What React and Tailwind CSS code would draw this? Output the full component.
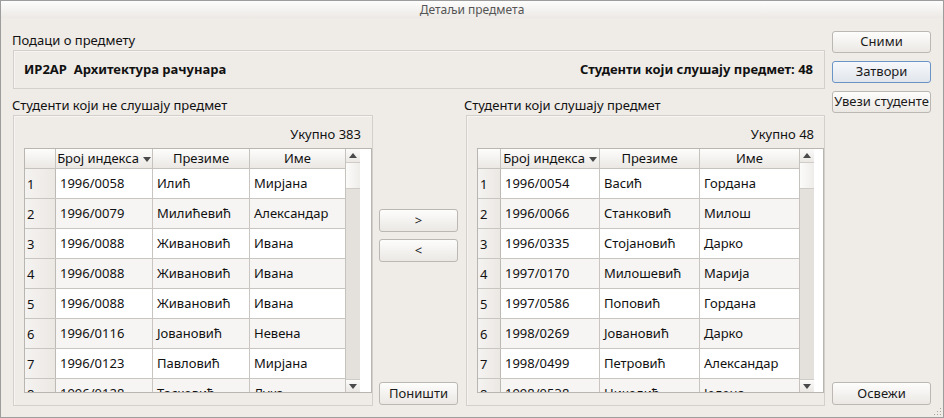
import clsx from "clsx";

const notListening = [
  ["1996/0058", "Илић", "Мирјана"],
  ["1996/0079", "Милићевић", "Александар"],
  ["1996/0088", "Живановић", "Ивана"],
  ["1996/0088", "Живановић", "Ивана"],
  ["1996/0088", "Живановић", "Ивана"],
  ["1996/0116", "Јовановић", "Невена"],
  ["1996/0123", "Павловић", "Мирјана"],
  ["1996/0128", "Тасковић", "Лука"],
];

const listening = [
  ["1996/0054", "Васић", "Гордана"],
  ["1996/0066", "Станковић", "Милош"],
  ["1996/0335", "Стојановић", "Дарко"],
  ["1997/0170", "Милошевић", "Марија"],
  ["1997/0586", "Поповић", "Гордана"],
  ["1998/0269", "Јовановић", "Дарко"],
  ["1998/0499", "Петровић", "Александар"],
  ["1998/0538", "Николић", "Јелена"],
];

function Btn({ children, primary, className }) {
  return (
    <div
      className={clsx(
        "flex items-center justify-center rounded-[3px] border text-[13px] text-[#1a1a1a]",
        primary
          ? "border-[#6a93c6] bg-linear-to-b from-[#f6f8fb] to-[#e1e6ec]"
          : "border-[#bbb7b2] bg-linear-to-b from-[#fdfdfc] to-[#ebe8e4]",
        className
      )}
    >
      {children}
    </div>
  );
}

function Scrollbar() {
  return (
    <div className="flex w-[15px] shrink-0 flex-col border-l border-[#c6c2bd] bg-[#e4e1dd]">
      <div className="flex h-[14px] items-center justify-center border-b border-[#cfcbc6] bg-linear-to-b from-[#fbfbfa] to-[#ebe8e4]">
        <div className="h-0 w-0 border-x-[4px] border-b-[5px] border-x-transparent border-b-[#4a4a4a]" />
      </div>
      <div className="h-[26px] border-b border-[#cfcbc6] bg-linear-to-r from-[#fbfbfa] to-[#efedea]" />
      <div className="flex-1" />
      <div className="flex h-[13px] items-center justify-center border-t border-[#cfcbc6] bg-linear-to-b from-[#fbfbfa] to-[#ebe8e4]">
        <div className="h-0 w-0 border-x-[4px] border-t-[5px] border-x-transparent border-t-[#4a4a4a]" />
      </div>
    </div>
  );
}

function StudentTable({ rows, wide }) {
  const rh = wide ? "w-[31px]" : "w-[23px]";
  const c1 = wide ? "w-[97px]" : "w-[99px]";
  const c2 = wide ? "w-[97px]" : "w-[100px]";
  const c3 = wide ? "w-[95px]" : "w-[99px]";
  return (
    <div className="flex h-[245px] border border-[#b9b5b0] bg-white">
      <div className="flex flex-col overflow-hidden">
        <div className="flex h-[20px] shrink-0 border-b border-[#c6c2bd] bg-linear-to-b from-[#fdfdfc] to-[#ebe8e4] text-[13px]">
          <div className={clsx(rh, "shrink-0 border-r border-[#c6c2bd]")} />
          <div className={clsx(c1, "flex shrink-0 items-center justify-center gap-[4px] border-r border-[#c6c2bd]")}>
            Број индекса
            <span className="mt-px h-0 w-0 border-x-[4px] border-t-[5px] border-x-transparent border-t-[#4a4a4a]" />
          </div>
          <div className={clsx(c2, "flex shrink-0 items-center justify-center border-r border-[#c6c2bd]")}>Презиме</div>
          <div className={clsx(c3, "flex shrink-0 items-center justify-center")}>Име</div>
        </div>
        {rows.map((r, i) => (
          <div
            key={i}
            className={clsx(
              "flex h-[30px] shrink-0 border-b border-[#c9c6c2] text-[13px]",
              i % 2 ? "bg-[#f6f5f3]" : "bg-white"
            )}
          >
            <div className={clsx(rh, "flex shrink-0 items-center border-r border-[#bdb9b4] bg-linear-to-r from-[#f5f3f1] to-[#ebe8e4] pl-[2px] pt-[3px]")}>
              {i + 1}
            </div>
            <div className={clsx(c1, "flex shrink-0 items-center border-r border-[#c9c6c2] pl-[4px]")}>{r[0]}</div>
            <div className={clsx(c2, "flex shrink-0 items-center border-r border-[#c9c6c2] pl-[4px]")}>{r[1]}</div>
            <div className={clsx(c3, "flex shrink-0 items-center pl-[4px]")}>{r[2]}</div>
          </div>
        ))}
      </div>
      <Scrollbar />
    </div>
  );
}

function Frame({ children, className }) {
  return (
    <div className={clsx("border border-[#d3cfca] bg-[#efece8] shadow-[inset_1px_1px_0_#f7f5f3]", className)}>
      {children}
    </div>
  );
}

export default function App() {
  return (
    <div className="flex h-[418px] w-[944px] flex-col border border-[#9d9d9d] bg-[#efebe7] font-['Noto_Sans',sans-serif] text-[#111]">
      <div className="flex h-[17px] shrink-0 items-center justify-center bg-linear-to-b from-[#fdfdfd] to-[#ece9e5] text-[12px] text-[#555]">
        Детаљи предмета
      </div>
      <div className="relative flex flex-1 pb-[11px] pl-[12px] pr-[12px] pt-[13px]">
        <div className="flex w-[812px] flex-col">
          <div className="-ml-px h-[19px] text-[13px] leading-[19px]">Подаци о предмету</div>
          <Frame className="flex h-[39px] items-center justify-between pl-[10px] pr-[11px] text-[13px] font-bold">
            <span>ИР2АР&nbsp;&nbsp;Архитектура рачунара</span>
            <span>Студенти који слушају предмет: 48</span>
          </Frame>
          <div className="flex h-[26px] items-end pb-px text-[13px] leading-[18px]">
            <div className="-ml-px w-[453px]">Студенти који не слушају предмет</div>
            <div className="-ml-px">Студенти који слушају предмет</div>
          </div>
          <div className="flex flex-1">
            <Frame className="flex w-[360px] flex-col pl-[10px]">
              <div className="mt-[9px] h-[18px] pr-[11px] text-right text-[13px] leading-[18px]">Укупно 383</div>
              <div className="mt-[5px]">
                <StudentTable rows={notListening} wide />
              </div>
            </Frame>
            <div className="flex w-[93px] flex-col pl-[6px]">
              <Btn className="mt-[94px] h-[23px] w-[79px]">&gt;</Btn>
              <Btn className="mt-[7px] h-[23px] w-[79px]">&lt;</Btn>
              <Btn className="mb-px mt-auto h-[23px] w-[79px]">Поништи</Btn>
            </div>
            <Frame className="flex w-[359px] flex-col pl-[10px]">
              <div className="mt-[9px] h-[18px] pr-[10px] text-right text-[13px] leading-[18px]">Укупно 48</div>
              <div className="mt-[5px]">
                <StudentTable rows={listening} />
              </div>
            </Frame>
          </div>
        </div>
        <div className="ml-[7px] flex w-[99px] flex-col">
          <Btn className="h-[22px]">Сними</Btn>
          <Btn primary className="mt-[8px] h-[22px]">Затвори</Btn>
          <Btn className="mt-[8px] h-[22px] text-[12.5px]">Увези студенте</Btn>
          <Btn className="mb-px mt-auto h-[23px]">Освежи</Btn>
        </div>
        <svg className="absolute bottom-[1px] right-[1px]" width="10" height="10" viewBox="0 0 10 10">
          {[[8, 2], [5, 5], [8, 5], [2, 8], [5, 8], [8, 8]].map(([x, y], i) => (
            <rect key={i} x={x} y={y} width="1" height="1" fill="#a8a49f" />
          ))}
        </svg>
      </div>
    </div>
  );
}
